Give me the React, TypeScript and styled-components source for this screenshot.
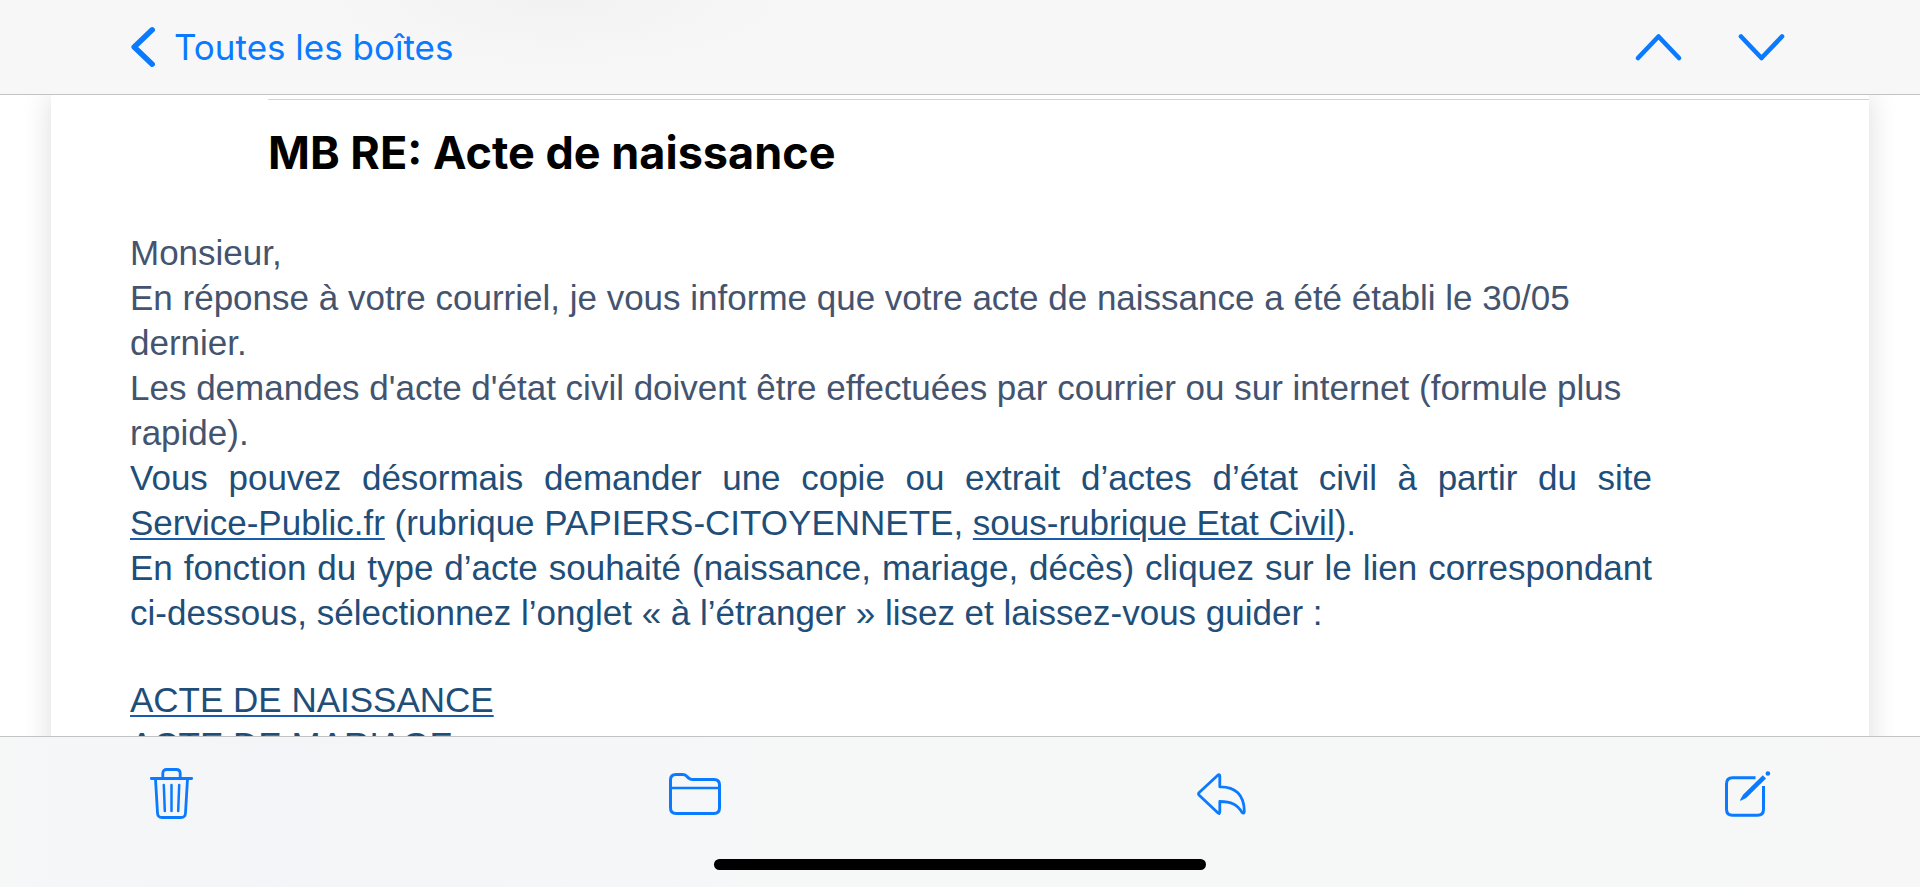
import React from "react";
import styled, { createGlobalStyle } from "styled-components";

const blue = "#0a7aff";

const GlobalStyle = createGlobalStyle`
  *, *::before, *::after { box-sizing: border-box; }
  body { margin: 0; background: #fff; }
`;

const Screen = styled.div`
  display: flex;
  flex-direction: column;
  height: 100vh;
  overflow: hidden;
  background: #fff;
`;

const NavBar = styled.header`
  flex: none;
  display: flex;
  align-items: center;
  justify-content: space-between;
  height: 95px;
  padding: 0 136px 0 131px;
  border-bottom: 1px solid #c3c3c4;
  background: radial-gradient(ellipse 240px 70px at 29% 0, #f2f2f2, #f2f2f200), #f7f7f7;
`;

const BarButton = styled.button`
  display: flex;
  align-items: center;
  gap: 19px;
  padding: 0;
  border: 0;
  background: none;
  color: ${blue};
  font: 400 35px/48px Inter, "Liberation Sans", sans-serif;
  cursor: pointer;
`;

const ButtonGroup = styled.div`
  display: flex;
  align-items: center;
  gap: 58px;
`;

const Glyph = styled.svg.attrs({ "aria-hidden": true, fill: "none", stroke: "currentColor" })`
  display: block;
  overflow: visible;
  stroke-linecap: round;
  stroke-linejoin: round;
`;

const Viewport = styled.main`
  flex: 1;
  min-height: 0;
  padding: 0 51px;
  overflow: hidden;
`;

const Message = styled.article`
  min-height: 100%;
  padding: 4px 0 0 79px;
  background: #fff;
  box-shadow: 0 0 28px rgba(0, 0, 0, 0.14);
`;

const Subject = styled.h1`
  margin: 0 0 45px 138px;
  padding-top: 21px;
  border-top: 1px solid #d3d3d5;
  color: #000;
  font: 700 45px/64px Inter, "Liberation Sans", sans-serif;
`;

const Body = styled.div`
  margin-right: 217px;
  font: 400 35px/45px "Liberation Sans", Arial, sans-serif;
`;

const Paragraph = styled.p<{ $tone: "slate" | "navy"; $justify?: boolean }>`
  margin: 0;
  color: ${(p) => (p.$tone === "slate" ? "#44546f" : "#1f4e79")};
  text-align: ${(p) => (p.$justify ? "justify" : "left")};
`;

const LinkList = styled.ul`
  margin: 42px 0 0;
  padding: 0;
  list-style: none;
`;

const TextLink = styled.a`
  color: #1f4e79;
  white-space: nowrap;
  text-decoration: underline #1a5bab 2px;
  text-underline-offset: 3px;
`;

const Toolbar = styled.footer`
  flex: none;
  display: flex;
  flex-direction: column;
  align-items: center;
  justify-content: space-between;
  height: 151px;
  padding: 31px 150px 17px;
  border-top: 1px solid #c3c3c4;
  background: linear-gradient(90deg, #f6f7f7, #f3f5f8 14%, #f6f7f7 40%, #f7f7f7);
`;

const ToolRow = styled.nav`
  display: flex;
  align-items: center;
  justify-content: space-between;
  width: 100%;
`;

const HomeIndicator = styled.div`
  width: 492px;
  height: 11px;
  border-radius: 6px;
  background: #000;
`;

export default function App() {
  return (
    <Screen>
      <GlobalStyle />
      <NavBar>
        <BarButton type="button">
          <Glyph width="24" height="40" viewBox="0 0 24 40" strokeWidth="5.500">
            <path d="M21.200 2.800 3.200 20l18 17.200" />
          </Glyph>
          Toutes les boîtes
        </BarButton>
        <ButtonGroup>
          <BarButton type="button" aria-label="Message précédent">
            <Glyph width="45" height="26" viewBox="0 0 45 26" strokeWidth="4.600">
              <path d="M2 24 22.500 2.500 43 24" />
            </Glyph>
          </BarButton>
          <BarButton type="button" aria-label="Message suivant">
            <Glyph width="45" height="26" viewBox="0 0 45 26" strokeWidth="4.600">
              <path d="M2 2.500 22.500 24 43 2.500" />
            </Glyph>
          </BarButton>
        </ButtonGroup>
      </NavBar>

      <Viewport>
        <Message>
          <Subject>MB RE: Acte de naissance</Subject>
          <Body>
            <Paragraph $tone="slate">Monsieur,</Paragraph>
            <Paragraph $tone="slate">
              En réponse à votre courriel, je vous informe que votre acte de naissance a été établi le 30/05 dernier.
            </Paragraph>
            <Paragraph $tone="slate">
              Les demandes d'acte d'état civil doivent être effectuées par courrier ou sur internet (formule plus
              rapide).
            </Paragraph>
            <Paragraph $tone="navy" $justify>
              Vous pouvez désormais demander une copie ou extrait d’actes d’état civil à partir du site{" "}
              <TextLink href="#service-public">Service-Public.fr</TextLink> (rubrique PAPIERS-CITOYENNETE,{" "}
              <TextLink href="#etat-civil">sous-rubrique Etat Civil</TextLink>).
            </Paragraph>
            <Paragraph $tone="navy" $justify>
              En fonction du type d’acte souhaité (naissance, mariage, décès) cliquez sur le lien correspondant
              ci-dessous, sélectionnez l’onglet « à l’étranger » lisez et laissez-vous guider :
            </Paragraph>
            <LinkList>
              <li>
                <TextLink href="#naissance">ACTE DE NAISSANCE</TextLink>
              </li>
              <li>
                <TextLink href="#mariage">ACTE DE MARIAGE</TextLink>
              </li>
            </LinkList>
          </Body>
        </Message>
      </Viewport>

      <Toolbar>
        <ToolRow aria-label="Actions">
          <BarButton type="button" aria-label="Supprimer">
            <Glyph width="43" height="51" viewBox="0 0 43 51" strokeWidth="2.800">
              <path d="M1.300 10.500h40.400M12.800 10V5.500q0-4 4-4h9.400q4 0 4 4V10M5.500 11 7.500 45q.3 4.500 4.500 4.500h19q4.200 0 4.500-4.500l2-34" />
              <path d="m13.800 17 1 26M21.500 17v26M29.200 17l-1 26" strokeWidth="2.500" />
            </Glyph>
          </BarButton>
          <BarButton type="button" aria-label="Déplacer">
            <Glyph width="53" height="42" viewBox="0 0 53 42" strokeWidth="3">
              <path d="M1.500 35V7q0-5.500 5.500-5.500h6.500q2.500 0 4.300 1.800l1.900 1.800q1.500 1.400 3.800 1.400H45q5.500 0 5.500 5.500v23q0 5.500-5.500 5.500H7q-5.500 0-5.500-5.500z" />
              <path d="M2 15h48" strokeWidth="2.500" strokeLinecap="butt" />
            </Glyph>
          </BarButton>
          <BarButton type="button" aria-label="Répondre">
            <Glyph width="51" height="42" viewBox="1 0 51 42" strokeWidth="2.800">
              <path d="M2.200 19.600 20.800 2.200q2-1.400 2 1v10.600C38.500 13.500 47 22 47.300 38q0 3.400-2.200 1.400C40 31.500 34.500 28.500 22.800 28.500v10.300q0 2.800-2 1L2.200 22.200q-1.400-1.300 0-2.600z" />
            </Glyph>
          </BarButton>
          <BarButton type="button" aria-label="Nouveau message">
            <Glyph width="45" height="46" viewBox="0 0 45 46">
              <path
                d="M30.500 6.800H7.500q-6 0-6 6v25.400q0 6 6 6h25q6 0 6-6V15"
                strokeWidth="3"
                style={{ strokeLinecap: "butt" }}
              />
              <path
                d="M37.800 4.300 18 23.800 15.200 28.700q-.4 1.400 1 .9l5-2.600L41 7.500z"
                fill="currentColor"
                stroke="none"
              />
              <circle cx="42.900" cy="2.500" r="2.300" fill="currentColor" stroke="none" />
            </Glyph>
          </BarButton>
        </ToolRow>
        <HomeIndicator />
      </Toolbar>
    </Screen>
  );
}
